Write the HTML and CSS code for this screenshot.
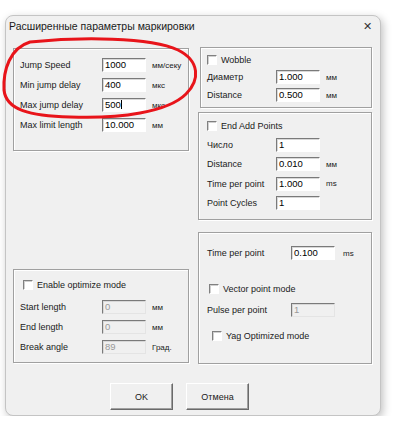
FILE: index.html
```html
<!DOCTYPE html>
<html lang="ru">
<head>
    <meta charset="UTF-8">
    <title>Расширенные параметры маркировки</title>
    <link rel="stylesheet" href="styles.css">
</head>
<body>
    <div class="window">
        <div class="titlebar">
            <span class="title">Расширенные параметры маркировки</span>
            <span class="close">&#x2715;</span>
        </div>

        <div class="content">
            <!-- Left column -->
            <div class="column left">
                <div class="group g-jump">
                    <div class="row"><span class="label">Jump Speed</span><span class="field">1000</span><span class="unit">мм/секу</span></div>
                    <div class="row"><span class="label">Min jump delay</span><span class="field">400</span><span class="unit">мкс</span></div>
                    <div class="row"><span class="label">Max jump delay</span><span class="field">500<i class="caret"></i></span><span class="unit">мкс</span></div>
                    <div class="row"><span class="label">Max limit length</span><span class="field">10.000</span><span class="unit">мм</span></div>
                </div>

                <div class="group g-optimize">
                    <div class="check"><span class="box"></span>Enable optimize mode</div>
                    <div class="row"><span class="label">Start length</span><span class="field disabled">0</span><span class="unit">мм</span></div>
                    <div class="row"><span class="label">End length</span><span class="field disabled">0</span><span class="unit">мм</span></div>
                    <div class="row"><span class="label">Break angle</span><span class="field disabled">89</span><span class="unit">Град.</span></div>
                </div>
            </div>

            <!-- Right column -->
            <div class="column right">
                <div class="group g-wobble">
                    <div class="check"><span class="box"></span>Wobble</div>
                    <div class="row"><span class="label">Диаметр</span><span class="field">1.000</span><span class="unit">мм</span></div>
                    <div class="row"><span class="label">Distance</span><span class="field">0.500</span><span class="unit">мм</span></div>
                </div>

                <div class="group g-points">
                    <div class="check"><span class="box"></span>End Add Points</div>
                    <div class="row"><span class="label">Число</span><span class="field">1</span></div>
                    <div class="row"><span class="label">Distance</span><span class="field">0.010</span><span class="unit">мм</span></div>
                    <div class="row"><span class="label">Time per point</span><span class="field">1.000</span><span class="unit">ms</span></div>
                    <div class="row"><span class="label">Point Cycles</span><span class="field">1</span></div>
                </div>

                <div class="group g-vector">
                    <div class="row"><span class="label">Time per point</span><span class="field">0.100</span><span class="unit">ms</span></div>
                    <div class="check"><span class="box"></span>Vector point mode</div>
                    <div class="row"><span class="label">Pulse per point</span><span class="field disabled">1</span></div>
                    <div class="check yag"><span class="box"></span>Yag Optimized mode</div>
                </div>
            </div>
        </div>

        <div class="buttons">
            <button class="btn">OK</button>
            <button class="btn">Отмена</button>
        </div>
    </div>

    <!-- red hand-drawn mark over the first group -->
    <svg class="mark" width="400" height="423" viewBox="0 0 400 423">
        <path d="M 30 42 C 80 37, 150 37, 178 50 C 200 61, 200 80, 186 94 C 168 112, 120 119, 70 117 C 30 116, 6 110, 4 90 C 3 70, 10 48, 30 42"
              fill="none" stroke="#e8141a" stroke-width="3" stroke-linecap="round"/>
    </svg>
</body>
</html>
```

FILE: styles.css
```css
/* Dialog window */
body {
    margin: 0;
    background: #ffffff;
    font-family: "Liberation Sans", Arial, sans-serif;
    font-size: 9px;
    color: #1a1a1a;
}

.window {
    margin: 15px 0 0 5px;
    width: 376px;
    height: 401px;
    box-sizing: border-box;
    border: 1px solid #c4c4c4;
    border-radius: 8px;
    background: #f0f0f0;
    box-shadow: 2px 3px 8px rgba(0, 0, 0, 0.25);
}

.titlebar {
    display: flex;
    justify-content: space-between;
    align-items: center;
    height: 20px;
    padding: 0 8px 0 3px;
    font-size: 10.5px;
}

.close {
    font-size: 11px;
    color: #333;
}

.content {
    display: grid;
    grid-template-columns: 176px 174px;
    column-gap: 9px;
    padding: 12px 0 0 7px;
}

.column {
    display: flex;
    flex-direction: column;
}

/* Group boxes */
.group {
    box-sizing: border-box;
    border: 1px solid #a0a0a0;
    box-shadow: inset 1px 1px 0 #ffffff, 1px 1px 0 #ffffff;
}

.g-jump {
    height: 103px;
    padding: 6px 0 0 6px;
}

.g-optimize {
    height: 94px;
    margin-top: 118px;
    padding: 7px 0 0 6px;
}

.g-wobble {
    height: 61px;
    margin: -1px 0 0 2px;
    padding: 4px 0 0 6px;
}

.g-wobble .row {
    height: 18px;
}

.g-points {
    height: 108px;
    margin-top: 4px;
    padding: 4px 0 0 8px;
}

.g-points .row {
    height: 19.5px;
}

.g-vector {
    height: 132px;
    margin-top: 12px;
    padding: 10px 0 0 8px;
}

/* Rows */
.row {
    display: flex;
    align-items: center;
    height: 20px;
}

.label {
    width: 82px;
}

.g-wobble .label,
.g-points .label {
    width: 69px;
}

.g-vector .label {
    width: 84px;
}

.field {
    box-sizing: border-box;
    width: 44px;
    height: 14px;
    line-height: 12px;
    padding-left: 2px;
    background: #ffffff;
    border: 1px solid #ffffff;
    border-top-color: #7a7a7a;
    border-left-color: #7a7a7a;
    box-shadow: inset 1px 1px 0 #d8d8d8;
    font-size: 9.5px;
    color: #000;
}

.field.disabled {
    background: #f0f0f0;
    color: #9a9a9a;
    border-right-color: #e4e4e4;
    border-bottom-color: #e4e4e4;
}

.caret {
    display: inline-block;
    width: 1px;
    height: 9px;
    background: #000;
    vertical-align: -1px;
}

.unit {
    padding-left: 6px;
    font-size: 8px;
}

.g-vector .unit {
    padding-left: 8px;
}

/* Checkboxes */
.check {
    display: flex;
    align-items: center;
    gap: 4px;
    height: 16px;
}

.g-points .check {
    height: 18px;
}

.g-optimize .check {
    margin: 0 0 4px 3px;
}

.g-vector .check {
    margin: 18px 0 3px 2px;
}

.g-vector .check.yag {
    margin: 8px 0 0 5px;
}

.box {
    box-sizing: border-box;
    width: 10px;
    height: 10px;
    background: #ffffff;
    border: 1px solid #ffffff;
    border-top-color: #808080;
    border-left-color: #808080;
    box-shadow: inset 1px 1px 0 #d0d0d0;
}

/* Buttons */
.buttons {
    display: flex;
    gap: 13px;
    padding: 19px 0 0 104px;
}

.btn {
    width: 63px;
    height: 27px;
    font-family: "Liberation Sans", Arial, sans-serif;
    font-size: 9px;
    color: #1a1a1a;
    background: #f0f0f0;
    border: 1px solid #ffffff;
    border-right-color: #6a6a6a;
    border-bottom-color: #6a6a6a;
    box-shadow: inset -1px -1px 0 #a0a0a0;
}

.mark {
    position: absolute;
    top: 0;
    left: 0;
    pointer-events: none;
}
```
